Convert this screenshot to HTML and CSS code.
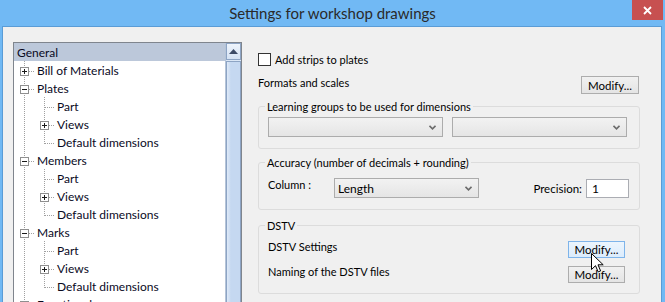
FILE: index.html
```html
<!DOCTYPE html>
<html lang="en">
<head>
    <meta charset="UTF-8">
    <title>Settings for workshop drawings</title>
    <link rel="stylesheet" href="styles.css">
</head>
<body>
    <header class="titlebar">
        <span></span>
        <h1 class="title">Settings for workshop drawings</h1>
        <button class="close" title="Close">
            <svg width="9" height="9" viewBox="0 0 9 9"><path d="M1 1L8 8M8 1L1 8" stroke="#fff" stroke-width="1.8"/></svg>
        </button>
    </header>

    <div class="frame">
        <!-- left tree -->
        <div class="tree">
            <ul class="tree-list">
                <li class="node root selected"><span class="label">General</span></li>
                <li class="node"><span class="g g-tee"><svg class="exp" width="9" height="9"><rect x=".5" y=".5" width="8" height="8"/><path d="M2 4.5H7M4.5 2V7"/></svg></span><span class="label">Bill of Materials</span></li>
                <li class="node"><span class="g g-tee"><svg class="exp" width="9" height="9"><rect x=".5" y=".5" width="8" height="8"/><path d="M2 4.5H7"/></svg></span><span class="label">Plates</span></li>
                <li class="node"><span class="g g-line"></span><span class="g g-tee"></span><span class="label">Part</span></li>
                <li class="node"><span class="g g-line"></span><span class="g g-tee"><svg class="exp" width="9" height="9"><rect x=".5" y=".5" width="8" height="8"/><path d="M2 4.5H7M4.5 2V7"/></svg></span><span class="label">Views</span></li>
                <li class="node"><span class="g g-line"></span><span class="g g-end"></span><span class="label">Default dimensions</span></li>
                <li class="node"><span class="g g-tee"><svg class="exp" width="9" height="9"><rect x=".5" y=".5" width="8" height="8"/><path d="M2 4.5H7"/></svg></span><span class="label">Members</span></li>
                <li class="node"><span class="g g-line"></span><span class="g g-tee"></span><span class="label">Part</span></li>
                <li class="node"><span class="g g-line"></span><span class="g g-tee"><svg class="exp" width="9" height="9"><rect x=".5" y=".5" width="8" height="8"/><path d="M2 4.5H7M4.5 2V7"/></svg></span><span class="label">Views</span></li>
                <li class="node"><span class="g g-line"></span><span class="g g-end"></span><span class="label">Default dimensions</span></li>
                <li class="node"><span class="g g-tee"><svg class="exp" width="9" height="9"><rect x=".5" y=".5" width="8" height="8"/><path d="M2 4.5H7"/></svg></span><span class="label">Marks</span></li>
                <li class="node"><span class="g g-line"></span><span class="g g-tee"></span><span class="label">Part</span></li>
                <li class="node"><span class="g g-line"></span><span class="g g-tee"><svg class="exp" width="9" height="9"><rect x=".5" y=".5" width="8" height="8"/><path d="M2 4.5H7M4.5 2V7"/></svg></span><span class="label">Views</span></li>
                <li class="node"><span class="g g-line"></span><span class="g g-end"></span><span class="label">Default dimensions</span></li>
                <li class="node"><span class="g g-tee"><svg class="exp" width="9" height="9"><rect x=".5" y=".5" width="8" height="8"/><path d="M2 4.5H7"/></svg></span><span class="label">Functional groups</span></li>
            </ul>
            <div class="scrollbar">
                <div class="sb-up">
                    <svg width="9" height="5" viewBox="0 0 9 5"><path d="M0 5L4.5 0L9 5Z" fill="#3d4b66"/></svg>
                </div>
                <div class="sb-thumb"></div>
            </div>
        </div>

        <!-- right settings -->
        <div class="settings">
            <label class="check-row">
                <span class="checkbox"></span>
                <span>Add strips to plates</span>
            </label>

            <div class="formats-row">
                <span class="text">Formats and scales</span>
                <button class="btn">Modify...</button>
            </div>

            <fieldset class="group group-learning">
                <legend>Learning groups to be used for dimensions</legend>
                <div class="combo-pair">
                    <div class="combo wide">
                        <span class="combo-text"></span>
                        <svg class="chev" width="7" height="5" viewBox="0 0 7 5"><path d="M.5 .8L3.5 3.8L6.5 .8" fill="none" stroke="#6b6b6b" stroke-width="1.6"/></svg>
                    </div>
                    <div class="combo wide">
                        <span class="combo-text"></span>
                        <svg class="chev" width="7" height="5" viewBox="0 0 7 5"><path d="M.5 .8L3.5 3.8L6.5 .8" fill="none" stroke="#6b6b6b" stroke-width="1.6"/></svg>
                    </div>
                </div>
            </fieldset>

            <fieldset class="group group-accuracy">
                <legend>Accuracy (number of decimals + rounding)</legend>
                <div class="accuracy-row">
                    <span class="text col-label">Column :</span>
                    <div class="combo length">
                        <span class="combo-text">Length</span>
                        <svg class="chev" width="7" height="5" viewBox="0 0 7 5"><path d="M.5 .8L3.5 3.8L6.5 .8" fill="none" stroke="#6b6b6b" stroke-width="1.6"/></svg>
                    </div>
                    <span class="text prec-label">Precision:</span>
                    <div class="textbox">1</div>
                </div>
            </fieldset>

            <fieldset class="group group-dstv">
                <legend>DSTV</legend>
                <div class="field-row">
                    <span class="text">DSTV Settings</span>
                    <button class="btn btn-small hover">Modify...</button>
                </div>
                <div class="field-row">
                    <span class="text">Naming of the DSTV files</span>
                    <button class="btn btn-small">Modify...</button>
                </div>
            </fieldset>
        </div>
    </div>

    <svg class="cursor" width="13" height="20" viewBox="0 0 13 20">
        <path d="M.5 .5V16.5L4.5 12.7L7.2 18.9L9.6 17.9L7 11.8H12.2Z" fill="#fff" stroke="#000" stroke-linejoin="round"/>
    </svg>
</body>
</html>
```

FILE: styles.css
```css
body {
    margin: 0;
    width: 665px;
    height: 302px;
    overflow: hidden;
    background-color: #71b9f4;
    font-family: Lato, "Noto Sans", sans-serif;
    color: #000;
    position: relative;
}

/* title bar */
.titlebar {
    height: 26px;
    display: grid;
    grid-template-columns: 1fr auto 1fr;
    align-items: start;
}
.title {
    margin: 0;
    font-size: 15px;
    font-weight: normal;
    line-height: 26px;
    color: #2a2a2a;
}
.close {
    justify-self: end;
    width: 31px;
    height: 20px;
    margin-right: 2px;
    padding: 0;
    border: none;
    background-color: #c75050;
    display: flex;
    align-items: center;
    justify-content: center;
}

/* window body */
.frame {
    margin: 0 3px 0 2px;
    height: 290px;
    border: 1px solid #5a9cd6;
    border-bottom: none;
    background-color: #f0f0f0;
    padding-left: 10px;
    display: flex;
    align-items: flex-start;
}

/* tree view */
.tree {
    margin-top: 15px;
    width: 229px;
    height: 280px;
    box-sizing: border-box;
    border: 1px solid #7f858d;
    background-color: #fff;
    display: flex;
}
.tree-list {
    flex: 1;
    margin: 0;
    padding: 0;
    list-style: none;
    font-size: 12px;
}
.node {
    height: 18px;
    display: flex;
    align-items: flex-start;
}
.node.root {
    padding-left: 3px;
}
.node.selected {
    background-color: #bcc8da;
}
.label {
    margin-left: 3px;
    line-height: 19px;
    white-space: nowrap;
    color: #0a0a1e;
}
.root .label {
    margin-left: 0;
}
.g {
    flex: none;
    width: 20px;
    height: 18px;
    display: flex;
    align-items: flex-start;
    background-repeat: no-repeat;
}
.g-line {
    background-image: repeating-linear-gradient(to bottom, #a0a0a0 0 1px, transparent 1px 2px);
    background-position: 10px 0;
    background-size: 1px 18px;
}
.g-tee {
    background-image:
        repeating-linear-gradient(to bottom, #a0a0a0 0 1px, transparent 1px 2px),
        repeating-linear-gradient(to right, #a0a0a0 0 1px, transparent 1px 2px);
    background-position: 10px 0, 11px 10px;
    background-size: 1px 18px, 9px 1px;
}
.g-end {
    background-image:
        repeating-linear-gradient(to bottom, #a0a0a0 0 1px, transparent 1px 2px),
        repeating-linear-gradient(to right, #a0a0a0 0 1px, transparent 1px 2px);
    background-position: 10px 0, 11px 10px;
    background-size: 1px 11px, 9px 1px;
}
.exp {
    margin: 6px 0 0 6px;
}
.exp rect {
    fill: #fff;
    stroke: #8f8f8f;
}
.exp path {
    stroke: #1a1a1a;
}

.scrollbar {
    width: 16px;
    flex: none;
    display: flex;
    flex-direction: column;
    background-color: #dbe7f6;
    border-left: 1px solid #b5c4d8;
    box-sizing: border-box;
}
.sb-up {
    height: 17px;
    box-sizing: border-box;
    border: 1px solid #8da4c4;
    background: linear-gradient(#eef4fc, #d6e3f4);
    display: flex;
    align-items: center;
    justify-content: center;
}
.sb-thumb {
    flex: 1;
    margin-top: 1px;
    border: 1px solid #8da4c4;
    border-bottom: none;
    background: linear-gradient(to right, #dfeaf8, #c5d8f1 30%, #c5d8f1);
}

/* settings side */
.settings {
    width: 382px;
    flex: none;
    margin-left: 16px;
    padding-top: 23px;
    font-size: 11px;
}
.text {
    line-height: 13px;
    white-space: nowrap;
}
.check-row {
    height: 18px;
    display: flex;
    align-items: center;
    gap: 4px;
}
.checkbox {
    width: 13px;
    height: 13px;
    box-sizing: border-box;
    border: 1px solid #333;
    background-color: #fff;
}
.formats-row {
    margin-top: 8px;
    margin-right: 1px;
    display: flex;
    justify-content: space-between;
    align-items: flex-start;
}

.btn {
    width: 58px;
    height: 18px;
    padding: 0;
    border: 1px solid #adadad;
    background: linear-gradient(#f1f1f1, #e4e4e4);
    font-family: inherit;
    font-size: 11.5px;
    color: #000;
}
.btn-small {
    width: 57px;
    height: 17px;
    line-height: 14px;
}
.btn.hover {
    border-color: #7eb4ea;
    background: linear-gradient(#ecf5fd, #dcecfc);
}

/* group boxes */
.group {
    min-width: 0;
    margin: 0;
    border: 1px solid #dcdcdc;
    border-radius: 3px;
    padding: 0 10px 11px 9px;
}
.group legend {
    margin-left: -3px;
    padding: 0 2px;
    line-height: 15px;
}
.group-learning {
    margin-top: 5px;
    padding-top: 3px;
}
.group-accuracy {
    margin-top: 6px;
    padding-top: 8px;
}
.group-dstv {
    margin-top: 8px;
    padding-top: 8px;
    padding-bottom: 10px;
}

.combo {
    height: 20px;
    box-sizing: border-box;
    border: 1px solid #acacac;
    background: linear-gradient(#f2f2f2, #e5e5e5);
    display: flex;
    align-items: center;
    justify-content: space-between;
    padding: 0 6px 0 3px;
}
.combo-text {
    font-size: 12px;
}
.combo-pair {
    display: flex;
    gap: 9px;
}
.combo.wide {
    width: 175px;
}
.combo.length {
    width: 145px;
}

.accuracy-row {
    display: flex;
    align-items: center;
}
.col-label {
    align-self: flex-start;
    width: 66px;
}
.prec-label {
    margin-left: auto;
    margin-top: 1px;
    font-size: 11.5px;
}
.textbox {
    margin-left: 4px;
    width: 43px;
    height: 19px;
    box-sizing: border-box;
    border: 1px solid #abadb3;
    background-color: #fff;
    padding-left: 5px;
    font-size: 12px;
    line-height: 17px;
}

.field-row {
    margin-right: 4px;
    display: flex;
    justify-content: space-between;
    align-items: flex-start;
}
.field-row + .field-row {
    margin-top: 8px;
}
.field-row .text {
    margin-top: -1px;
}

.cursor {
    position: absolute;
    left: 591px;
    top: 253px;
}
```
